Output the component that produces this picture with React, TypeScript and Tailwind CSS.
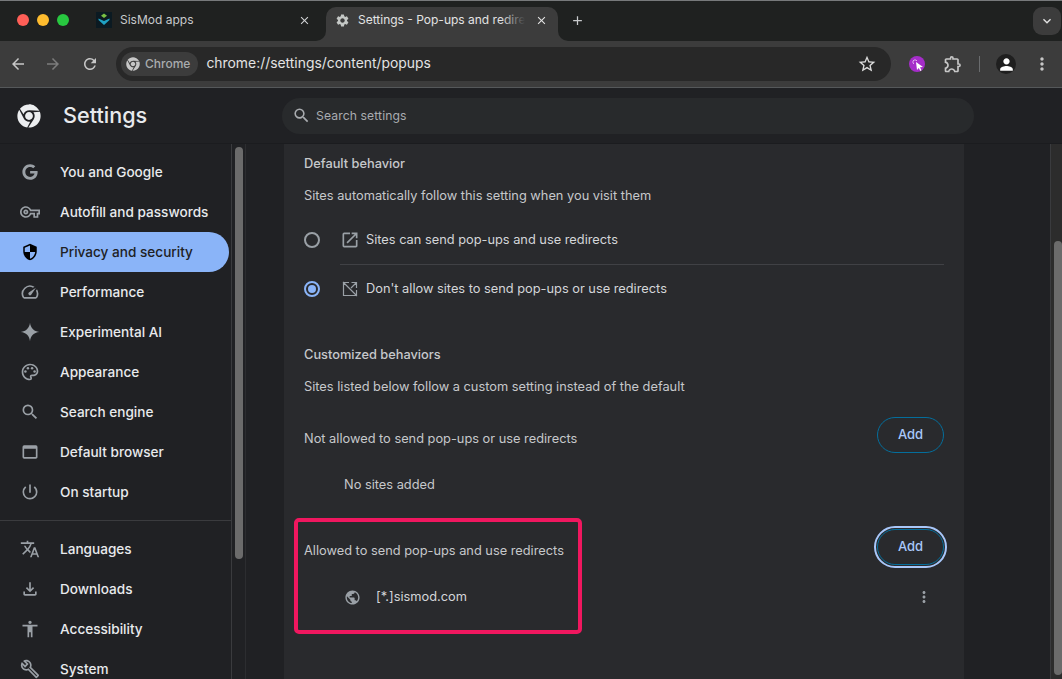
import React from "react";
import { FaChrome, FaGoogle } from "react-icons/fa";
import {
  MdAccessibility,
  MdAdd,
  MdArrowBack,
  MdArrowForward,
  MdClose,
  MdExpandMore,
  MdMoreVert,
  MdOpenInNew,
  MdOutlineBuild,
  MdOutlineExtension,
  MdOutlineFileDownload,
  MdOutlinePalette,
  MdOutlinePowerSettingsNew,
  MdOutlineSpeed,
  MdOutlineVpnKey,
  MdOutlineWebAsset,
  MdPerson,
  MdPublic,
  MdRefresh,
  MdSearch,
  MdSecurity,
  MdSettings,
  MdStarBorder,
  MdTranslate,
} from "react-icons/md";

function Sparkle() {
  return (
    <svg width="22" height="22" viewBox="0 0 24 24" fill="currentColor">
      <path d="M12 2c.7 5.800 4.200 9.300 10 10-5.800.7-9.300 4.200-10 10-.7-5.800-4.200-9.300-10-10 5.800-.7 9.300-4.200 10-10z" />
    </svg>
  );
}

function BlockedPopup() {
  return (
    <svg width="16" height="16" viewBox="0 0 16 16" fill="none" stroke="currentColor" strokeWidth="1.200">
      <path d="M7 1.500H1.500v13h13V9M1 1l14 14M9.500 1.500h5V7M14 2L9 7" />
    </svg>
  );
}

const firstGroup = [
  { label: "You and Google", icon: <FaGoogle size={16} /> },
  { label: "Autofill and passwords", icon: <MdOutlineVpnKey size={20} /> },
  { label: "Privacy and security", icon: <MdSecurity size={18} />, active: true },
  { label: "Performance", icon: <MdOutlineSpeed size={20} /> },
  { label: "Experimental AI", icon: <Sparkle /> },
  { label: "Appearance", icon: <MdOutlinePalette size={20} /> },
  { label: "Search engine", icon: <MdSearch size={20} /> },
  { label: "Default browser", icon: <MdOutlineWebAsset size={20} /> },
  { label: "On startup", icon: <MdOutlinePowerSettingsNew size={20} /> },
];

const secondGroup = [
  { label: "Languages", icon: <MdTranslate size={20} /> },
  { label: "Downloads", icon: <MdOutlineFileDownload size={20} /> },
  { label: "Accessibility", icon: <MdAccessibility size={20} /> },
  { label: "System", icon: <MdOutlineBuild size={20} /> },
];

function NavItem({ label, icon, active }: { label: string; icon: React.ReactNode; active?: boolean }) {
  return (
    <div
      className={
        active
          ? "flex h-10 w-[229px] items-center rounded-r-full bg-[#8ab4f8] text-[#202124]"
          : "flex h-10 w-[229px] items-center text-[#e8eaed]"
      }
    >
      <span
        className={
          active
            ? "flex w-[60px] shrink-0 justify-center pr-[1px] text-[#000000]"
            : "flex w-[60px] shrink-0 justify-center pr-[1px] text-[#9aa0a6]"
        }
      >
        {icon}
      </span>
      <span className="text-[13.6px] font-medium">{label}</span>
    </div>
  );
}

function AddButton({ focused }: { focused?: boolean }) {
  return (
    <div
      className={
        focused
          ? "flex h-9 w-[67px] items-center justify-center rounded-full border border-[#046e9c] text-[13px] font-medium text-[#a8c7fa] outline outline-2 outline-offset-1 outline-[#a8c7fa]"
          : "flex h-9 w-[67px] items-center justify-center rounded-full border border-[#046e9c] text-[13px] font-medium text-[#a8c7fa]"
      }
    >
      Add
    </div>
  );
}

export default function App() {
  return (
    <div className="flex h-[679px] w-[1062px] flex-col overflow-hidden bg-[#202124] font-['Inter',sans-serif]">
      {/* tab strip */}
      <div className="flex h-[41px] shrink-0 items-end border-t border-[#77797b] bg-[#1f2120]">
        <div className="flex h-[34px] w-[94px] shrink-0 items-center gap-2 pb-[8px] pl-[17px]">
          <span className="h-3 w-3 rounded-full bg-[#ff5f57]" />
          <span className="h-3 w-3 rounded-full bg-[#febc2e]" />
          <span className="h-3 w-3 rounded-full bg-[#28c840]" />
        </div>
        <div className="flex h-[34px] w-[232px] shrink-0 items-center pb-[8px] text-[#c8cacc]">
          <svg width="16" height="16" viewBox="0 0 16 16" className="mr-[8px] ml-[2px]">
            <rect width="16" height="16" fill="#0b1a22" />
            <path d="M8 1.500l3 2.300-3 2.200-3-2.200z" fill="#7ac143" />
            <path d="M2.500 6.500L8 9l5.500-2.500V8L8 13 2.500 8z" fill="#1fa2c4" />
          </svg>
          <span className="text-[12px]">SisMod apps</span>
          <MdClose size={13} className="ml-auto mr-[15px] text-[#d0d2d4]" />
        </div>
        <div className="relative flex h-[34px] w-[232px] shrink-0 items-center rounded-t-[10px] bg-[#3c3c3c] pb-[8px] pl-[9px] text-[#e3e3e3]">
          <div className="absolute bottom-0 left-[-10px] h-[10px] w-[10px] bg-[#3c3c3c]">
            <div className="h-full w-full rounded-br-[10px] bg-[#1f2120]" />
          </div>
          <div className="absolute right-[-10px] bottom-0 h-[10px] w-[10px] bg-[#3c3c3c]">
            <div className="h-full w-full rounded-bl-[10px] bg-[#1f2120]" />
          </div>
          <MdSettings size={15} className="mr-[8px] text-[#c4c7c5]" />
          <span className="relative w-[167px] overflow-hidden whitespace-nowrap text-[12px]">
            Settings - Pop-ups and redire
            <span className="absolute top-0 right-0 h-full w-6 bg-gradient-to-r from-transparent to-[#3c3c3c]" />
          </span>
          <MdClose size={13} className="ml-[10px] text-[#e3e3e3]" />
        </div>
        <div className="flex h-[34px] items-center pb-[8px] pl-[12px] text-[#c8cacc]">
          <MdAdd size={15} />
        </div>
        <div className="mb-[6px] ml-auto mr-[1px] flex h-7 w-7 items-center justify-center self-end rounded-[9px] bg-[#3c3c3c] text-[#e3e3e3]">
          <MdExpandMore size={16} />
        </div>
      </div>

      {/* toolbar */}
      <div className="flex h-[47px] shrink-0 items-center border-b border-[#55585a] bg-[#3c3c3c] pl-[9px] text-[#c7c7c7]">
        <MdArrowBack size={18} />
        <MdArrowForward size={18} className="ml-[17px] text-[#7c7c7c]" />
        <MdRefresh size={18} className="ml-[19px]" />
        <div className="ml-[17px] flex h-[34px] w-[775px] items-center rounded-full bg-[#282828] pl-[5px] pr-[14px]">
          <div className="flex h-6 items-center gap-[5px] rounded-full bg-[#3c3c3c] pl-[5px] pr-2">
            <FaChrome size={14} className="text-[#c7c7c7]" />
            <span className="text-[12px] font-medium text-[#a9acae]">Chrome</span>
          </div>
          <span className="ml-2 mb-[2px] text-[13.9px] text-[#e3e3e3]">chrome://settings/content/popups</span>
          <MdStarBorder size={20} className="ml-auto text-[#dcdcdc]" />
        </div>
        <div className="relative ml-[18px] flex h-4 w-4 items-center justify-center rounded-full bg-[#a52dc9]">
          <svg width="16" height="16" viewBox="0 0 16 16" className="absolute top-0 left-0">
            <path d="M3 6h2M6 3v2M4 4l1 1M8 4L7 5M4 8l1-1" stroke="#f0c8f8" strokeWidth="0.800" />
            <path d="M7 6l7 5-3 .3 1.500 3-1.200.7-1.500-3L8 14z" fill="#fff" />
          </svg>
        </div>
        <MdOutlineExtension size={20} className="ml-[18px] text-[#c7c7c7]" />
        <span className="ml-[16px] h-4 w-[1px] bg-[#6a6c6e]" />
        <div className="ml-[16px] flex h-5 w-5 items-center justify-center rounded-full bg-[#1f1f1f] text-white">
          <MdPerson size={19} />
        </div>
        <MdMoreVert size={20} className="ml-[16px] text-[#c7c7c7]" />
      </div>

      {/* settings header */}
      <div className="flex h-14 shrink-0 items-center border-b border-[#1b1c1f] bg-[#202124]">
        <span className="ml-[17px] text-[#eceef0]">
          <FaChrome size={24} />
        </span>
        <span className="ml-[22px] w-[219px] text-[21.600px] font-medium text-[#e8eaed]">Settings</span>
        <div className="flex h-9 w-[692px] items-center rounded-full bg-[#282a2c] pl-[10px] text-[#a9acb0]">
          <MdSearch size={19} />
          <span className="ml-[5px] pt-[1px] text-[12.200px] tracking-[0.1px]">Search settings</span>
        </div>
      </div>

      {/* body */}
      <div className="flex min-h-0 flex-1">
        <div className="flex w-[246px] shrink-0 border-r border-[#2c2d30]">
          <div className="w-[232px] shrink-0 border-r border-[#3a3b3e] pt-[8px]">
            {firstGroup.map((item) => (
              <NavItem key={item.label} {...item} />
            ))}
            <div className="mt-2 mb-2 h-[1px] bg-[#3a3b3e]" />
            {secondGroup.map((item) => (
              <NavItem key={item.label} {...item} />
            ))}
          </div>
          <div className="flex-1 pt-[3px] pl-[3px]">
            <div className="h-[412px] w-2 rounded-full bg-[#6b6b6b]" />
          </div>
        </div>

        <div className="ml-[38px] w-[680px] shrink-0 bg-[#292a2d] pl-5 pr-5 text-[12.800px] text-[#c6c8cb]">
          <div className="mt-[12px] font-medium leading-4">Default behavior</div>
          <div className="mt-[16px] leading-4">Sites automatically follow this setting when you visit them</div>

          <div className="mt-[12px] flex h-[48px] items-center">
            <span className="h-4 w-4 rounded-full border-2 border-[#9aa0a6]" />
            <div className="ml-[20px] flex h-full flex-1 items-center gap-[6px]">
              <MdOpenInNew size={20} className="text-[#9aa0a6]" />
              <span className="text-[#d4d6d9]">Sites can send pop-ups and use redirects</span>
            </div>
          </div>
          <div className="ml-9 h-[1px] bg-[#404145]" />
          <div className="flex h-[48px] items-center">
            <span className="flex h-4 w-4 items-center justify-center rounded-full border-2 border-[#8ab4f8]">
              <span className="h-2 w-2 rounded-full bg-[#8ab4f8]" />
            </span>
            <div className="ml-[22px] flex h-full flex-1 items-center gap-[8px] text-[#9aa0a6]">
              <BlockedPopup />
              <span className="text-[#d4d6d9]">Don't allow sites to send pop-ups or use redirects</span>
            </div>
          </div>

          <div className="mt-[34px] font-medium leading-4">Customized behaviors</div>
          <div className="mt-[16px] leading-4">Sites listed below follow a custom setting instead of the default</div>

          <div className="mt-[14px] flex h-[52px] items-center justify-between">
            <span className="pt-[8px]">Not allowed to send pop-ups or use redirects</span>
            <AddButton />
          </div>
          <div className="mt-[16px] pl-10 leading-4">No sites added</div>

          <div className="relative mt-[28px] flex h-[52px] items-center justify-between">
            <span className="pt-[8px]">Allowed to send pop-ups and use redirects</span>
            <AddButton focused />
            <div className="absolute top-[-3px] left-[-10px] h-[116px] w-[288px] rounded-[5px] border-4 border-[#f0175f]" />
          </div>
          <div className="mt-[2px] flex h-[44px] items-center pl-10 pr-[11px]">
            <MdPublic size={17} className="text-[#9aa0a6]" />
            <span className="ml-[15px] text-[#d4d6d9]">[*.]sismod.com</span>
            <MdMoreVert size={18} className="ml-auto text-[#9aa0a6]" />
          </div>
        </div>

        <div className="flex flex-1 justify-end">
          <div className="flex w-[12px] border-l border-[#3a3b3e] bg-[#2c2c2c] pl-[3px] pt-[97px]">
            <div className="h-[434px] w-2 rounded-full bg-[#6b6b6b]" />
          </div>
        </div>
      </div>
    </div>
  );
}
